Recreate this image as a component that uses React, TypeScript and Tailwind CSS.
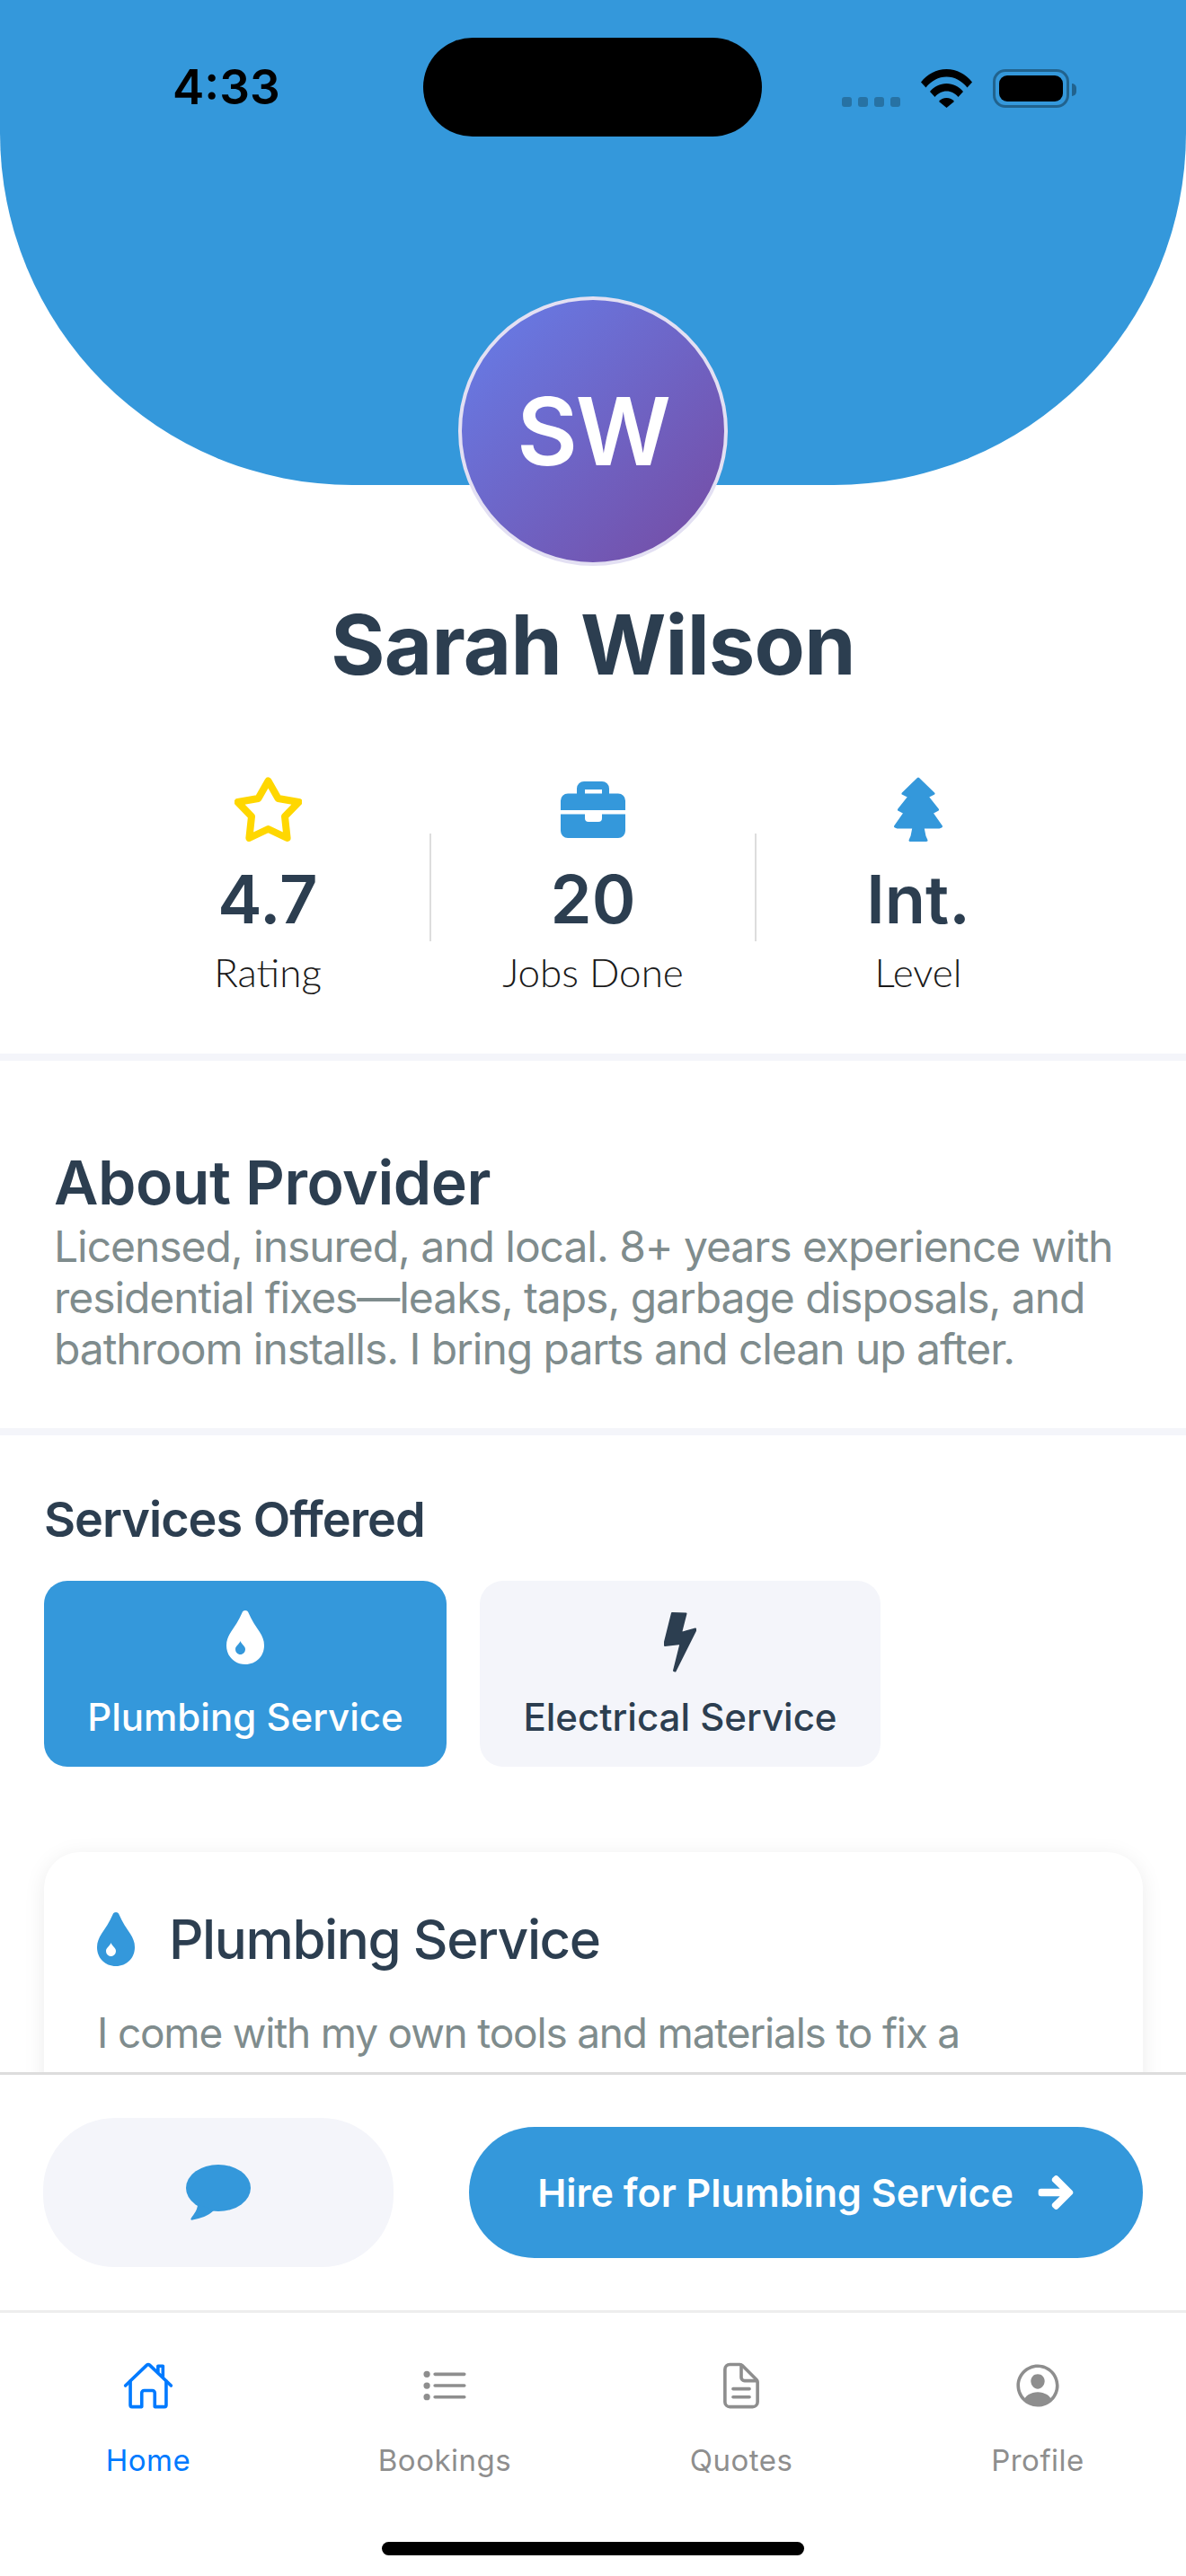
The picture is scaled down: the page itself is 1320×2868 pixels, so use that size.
import { FaArrowRight } from 'react-icons/fa'
import {
  IoDocumentTextOutline,
  IoHomeOutline,
  IoListOutline,
  IoPersonCircleOutline,
} from 'react-icons/io5'

function Drop({ className, inner }: { className: string; inner: string }) {
  return (
    <svg viewBox="0 0 42 60" className={className}>
      <path
        fill="currentColor"
        d="M21 0c2 0 3 1 3.500 2.500C28 11 33 18 37 24c3 5 5 9 5 15 0 12-9 21-21 21S0 51 0 39c0-6 2-10 5-15 4-6 9-13 12.500-21.500C18 1 19 0 21 0z"
      />
      <path fill={inner} d="M15.500 34c1.500 4 5.500 5.500 5.500 9 0 3.500-2.500 6-5.500 6S10 46.500 10 43c0-3.500 4-5 5.500-9z" />
    </svg>
  )
}

function Star() {
  return (
    <svg viewBox="0 0 75 72" className="h-[72px] w-[75px]">
      <polygon
        points="37.500,4.500 48.600,24 71.500,28 56,44 58.600,68 37.500,58 16.400,68 19,44 3.500,28 26.400,24"
        fill="none"
        stroke="#ffd700"
        strokeWidth="8"
        strokeLinejoin="round"
      />
    </svg>
  )
}

function Briefcase() {
  return (
    <svg viewBox="0 0 72 63" className="h-[63px] w-[72px] text-[#3498db]" fill="currentColor">
      <path
        fillRule="evenodd"
        d="M18 13.500V8a8 8 0 0 1 8-8h20a8 8 0 0 1 8 8v5.500h10a8 8 0 0 1 8 8V32H0V21.500a8 8 0 0 1 8-8zM27 9v4.500h19V9z"
      />
      <path d="M0 36.500h27V41a4 4 0 0 0 4 4h11a4 4 0 0 0 4-4v-4.500h26V55a8 8 0 0 1-8 8H8a8 8 0 0 1-8-8z" />
    </svg>
  )
}

function Tree() {
  return (
    <svg viewBox="0 0 54 72" className="h-[72px] w-[54px]">
      <polygon
        points="27,2 44,18.500 37,22 48.500,36.500 42,40 52.500,55 50,56 32,56 34,66 36,70.500 18,70.500 20,66 22,56 4,56 1.500,55 12,40 5.500,36.500 17,22 10,18.500"
        fill="#3498db"
        stroke="#3498db"
        strokeWidth="3"
        strokeLinejoin="round"
      />
    </svg>
  )
}

function Bolt() {
  return (
    <svg viewBox="0 0 36 67" className="h-[67px] w-[36px]">
      <polygon
        points="9,1 24.500,1.500 19,23 35,18.500 35,20.500 12.500,65.500 11,65 18.500,35 1,37 1,33"
        fill="#2c3e50"
        stroke="#2c3e50"
        strokeWidth="2"
        strokeLinejoin="round"
      />
    </svg>
  )
}

function Bubble() {
  return (
    <svg viewBox="0 0 72 62" className="h-[62px] w-[72px]" fill="#3498db">
      <ellipse cx="36" cy="26" rx="36" ry="26" />
      <path d="M13 44c0 6-4 11-7.500 16-.5 1.500.5 2 2 1.500C16 60 25 57 31 51z" />
    </svg>
  )
}

function Wifi() {
  return (
    <svg viewBox="0 0 57 43" className="h-[43px] w-[57px]">
      <path d="M0 14.500C7 5.500 17 0 28.500 0S50 5.500 57 14.500l-5.500 6C45.500 13 37.500 8.500 28.500 8.500S11.500 13 5.500 20.500z" />
      <path d="M10 25C14.500 19.500 21 16 28.500 16S42.500 19.500 47 25l-5.500 6c-3.300-4-8-6.500-13-6.500S18.800 27 15.500 31z" />
      <path d="M20 36c2-2.500 5-4 8.500-4s6.500 1.500 8.500 4l-8.500 7z" />
    </svg>
  )
}

function StatusBar() {
  return (
    <div className="flex h-[110px] items-center">
      <div className="w-[471px] pl-[192px] text-[53px] font-semibold leading-none text-black">4:33</div>
      <div className="h-[110px] w-[377px] rounded-full bg-black" />
      <div className="ml-[89px] mt-[2px] flex items-end">
        <div className="mb-[1px] flex gap-[7px]">
          {[0, 1, 2, 3].map((i) => (
            <div key={i} className="h-[11px] w-[11px] rounded-[3px] bg-black/25" />
          ))}
        </div>
        <div className="ml-[23px]">
          <Wifi />
        </div>
        <div className="ml-[23px] h-[43px] w-[85px] rounded-[14px] border-[3px] border-black/35 p-[4px]">
          <div className="h-full w-full rounded-[9px] bg-black" />
        </div>
        <div className="mb-[13px] ml-[3px] h-[14px] w-[5px] rounded-r-full bg-black/35" />
      </div>
    </div>
  )
}

const stats = [
  { icon: <Star />, value: '4.7', label: 'Rating' },
  { icon: <Briefcase />, value: '20', label: 'Jobs Done' },
  { icon: <Tree />, value: 'Int.', label: 'Level' },
]

const tabs = [
  { icon: IoHomeOutline, label: 'Home', active: true },
  { icon: IoListOutline, label: 'Bookings' },
  { icon: IoDocumentTextOutline, label: 'Quotes' },
  { icon: IoPersonCircleOutline, label: 'Profile' },
]

export default function App() {
  return (
    <div className="flex h-[2868px] w-[1320px] flex-col overflow-hidden bg-white font-['Inter',sans-serif]">
      <div className="h-[2307px] overflow-hidden">
        <div className="h-[540px] rounded-b-[392px] bg-[#3498db] pt-[42px]">
          <StatusBar />
        </div>

        <div className="relative mx-auto -mt-[210px] flex h-[300px] w-[300px] items-center justify-center rounded-full border-[4px] border-[#e3e0f3] bg-[linear-gradient(135deg,#667eea,#764ba2)] text-[104px] font-semibold leading-none tracking-[-2px] text-white">
          SW
        </div>

        <h1 className="mt-[32px] text-center text-[92px] font-bold leading-[112px] tracking-[-0.8px] text-[#2c3e50]">Sarah Wilson</h1>

        <div className="mt-[91px] flex items-center px-[118px]">
          {stats.map((s, i) => (
            <div key={s.label} className="contents">
              {i > 0 && <div className="h-[120px] w-[2px] bg-[#dddddd]" />}
              <div className="flex flex-1 flex-col items-center">
                <div className="flex h-[72px] items-center">{s.icon}</div>
                <div className="mt-[19px] text-[74px] font-semibold leading-[90px] text-[#2c3e50]">{s.value}</div>
                <div className="mt-[8px] font-['Lato',sans-serif] text-[44px] font-light leading-[56px] text-[#1a1a1a]">{s.label}</div>
              </div>
            </div>
          ))}
        </div>

        <div className="mt-[63px] h-[8px] bg-[#f4f5fa]" />

        <div className="pb-[60px] pl-[60px] pr-[61px] pt-[95px]">
          <h2 className="text-[68px] font-semibold leading-[80px] tracking-[-0.5px] text-[#2c3e50]">About Provider</h2>
          <p className="mt-[3px] text-[48px] leading-[57px] tracking-[-1.05px] text-[#7f8c8d]">
            Licensed, insured, and local. 8+ years experience with residential fixes—leaks, taps, garbage disposals, and bathroom installs. I bring parts and clean up after.
          </p>
        </div>

        <div className="h-[8px] bg-[#f4f5fa]" />

        <div className="px-[49px] pt-[62px]">
          <h3 className="text-[54px] font-semibold leading-[64px] tracking-[-1px] text-[#2c3e50]">Services Offered</h3>
          <div className="mt-[36px] flex gap-[37px]">
            <button className="flex h-[207px] w-[448px] flex-col items-center rounded-[26px] bg-[#3498db] pt-[33px] text-white">
              <div className="flex h-[70px] items-start">
                <Drop className="h-[60px] w-[42px]" inner="#3498db" />
              </div>
              <span className="mt-[24px] text-[42px] font-medium leading-[50px]">Plumbing Service</span>
            </button>
            <button className="flex h-[207px] w-[446px] flex-col items-center rounded-[26px] bg-[#f4f5fa] pt-[33px] text-[#2c3e50]">
              <div className="flex h-[70px] items-start pt-[2px]">
                <Bolt />
              </div>
              <span className="mt-[24px] text-[42px] font-medium leading-[50px]">Electrical Service</span>
            </button>
          </div>

          <div className="mt-[95px] h-[500px] w-[1223px] rounded-[40px] bg-white px-[59px] pt-[61px] shadow-[0_4px_24px_rgba(0,0,0,0.08)]">
            <div className="flex items-center gap-[38px]">
              <Drop className="h-[60px] w-[42px] text-[#3498db]" inner="#ffffff" />
              <h4 className="text-[60px] font-medium leading-[72px] tracking-[-1.4px] text-[#2c3e50]">Plumbing Service</h4>
            </div>
            <p className="mt-[38px] text-[46px] leading-[60px] tracking-[-1.2px] text-[#7f8c8d]">I come with my own tools and materials to fix a</p>
          </div>
        </div>
      </div>

      <div className="flex h-[268px] items-center justify-between border-t-[3px] border-b-[3px] border-t-[#dddddd] border-b-[#eeeeee] bg-white px-[48px]">
        <button className="flex h-[166px] w-[390px] items-center justify-center rounded-[80px] bg-[#f4f5fa]">
          <Bubble />
        </button>
        <button className="flex h-[146px] w-[750px] items-center justify-center gap-[26px] rounded-[73px] bg-[#3498db] text-[43px] font-semibold text-white">
          Hire for Plumbing Service
          <FaArrowRight className="h-[42px] w-[42px]" stroke="currentColor" strokeWidth="24" />
        </button>
      </div>

      <div className="flex flex-1 flex-col bg-white">
        <div className="flex pt-[52px]">
          {tabs.map((t) => (
            <div key={t.label} className={`flex flex-1 flex-col items-center ${t.active ? 'text-[#007aff]' : 'text-[#8e8e8e]'}`}>
              <t.icon className="h-[58px] w-[58px]" />
              <span className="mt-[34px] text-[33px] leading-[40px] tracking-[0.5px]">{t.label}</span>
            </div>
          ))}
        </div>
        <div className="mx-auto mt-[71px] h-[15px] w-[470px] rounded-full bg-black" />
      </div>
    </div>
  )
}
